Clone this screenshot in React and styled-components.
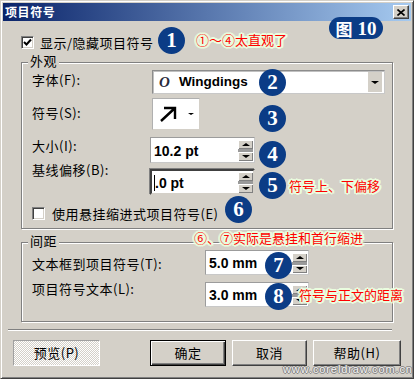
import React from 'react';
import styled, { createGlobalStyle, css } from 'styled-components';

const CJK = `"Noto Sans CJK SC", "Noto Sans", sans-serif`;
const SANS = `"Liberation Sans", Arial, sans-serif`;
const SERIF = `"Liberation Serif", "Times New Roman", serif`;

const Global = createGlobalStyle`
  html, body { margin: 0; padding: 0; background: #d4d0c8; }
  body { font-family: ${CJK}; color: #000; }
`;

const Stage = styled.div`
  position: relative;
  width: 414px;
  height: 379px;
  overflow: hidden;
`;

const Window = styled.div`
  box-sizing: border-box;
  width: 414px;
  height: 379px;
  background: #d4d0c8;
  border: 1px solid;
  border-color: #d4d0c8 #404040 #404040 #d4d0c8;
  box-shadow: inset 1px 1px 0 #fff, inset -1px -1px 0 #808080;
  padding: 2px;
  display: flex;
  flex-direction: column;
`;

const TitleBar = styled.div`
  flex: none;
  height: 18px;
  background: linear-gradient(to right, #0a246a, #a6caf0);
  display: flex;
  align-items: center;
  justify-content: space-between;
  padding: 0 2px;
`;

const TitleText = styled.span`
  color: #fff;
  font: bold 12px/18px ${CJK};
  letter-spacing: 0.6px;
`;

const CloseBtn = styled.div`
  box-sizing: border-box;
  width: 16px;
  height: 14px;
  background: #d4d0c8;
  border: 1px solid;
  border-color: #fff #404040 #404040 #fff;
  box-shadow: inset -1px -1px 0 #808080;
  display: flex;
  align-items: center;
  justify-content: center;
`;

const Body = styled.div`
  flex: 1;
  display: flex;
  flex-direction: column;
`;

const CheckRow = styled.div`
  display: flex;
  align-items: center;
  gap: ${p => p.$gap}px;
  height: 13px;
  margin: ${p => p.$mt}px 0 0 ${p => p.$ml}px;
  font: 13px/16px ${CJK};
  letter-spacing: 0.5px;
  white-space: nowrap;
`;

const CheckBox = styled.span`
  box-sizing: border-box;
  width: 13px;
  height: 13px;
  flex: none;
  background: #fff;
  border: 1px solid;
  border-color: #808080 #fff #fff #808080;
  box-shadow: inset 1px 1px 0 #404040, inset -1px -1px 0 #d4d0c8;
  display: flex;
  align-items: center;
  justify-content: center;
`;

const Group = styled.div`
  position: relative;
  box-sizing: border-box;
  margin: ${p => p.$mt}px 18px 0 18px;
  height: ${p => p.$h}px;
  border: 1px solid #808080;
  box-shadow: 1px 1px 0 #fff, inset 1px 1px 0 #fff;
  padding: 7px 0 0 10px;
  display: flex;
  flex-direction: column;
`;

const Legend = styled.span`
  position: absolute;
  left: 6px;
  top: -10px;
  padding: 0 2px;
  background: #d4d0c8;
  font: 13px/16px ${CJK};
  letter-spacing: 0.5px;
`;

const FormRow = styled.div`
  display: grid;
  grid-template-columns: ${p => p.$label}px auto;
  align-items: start;
  margin-top: ${p => p.$mt || 0}px;
  height: ${p => p.$h}px;
`;

const Label = styled.span`
  font: 13px/16px ${CJK};
  letter-spacing: 0.5px;
  margin-top: ${p => p.$dy}px;
  white-space: nowrap;
`;

const Combo = styled.div`
  box-sizing: border-box;
  margin-left: 2px;
  width: 233px;
  height: 24px;
  background: #fff;
  border: 1px solid;
  border-color: #8c8c8c #c8c8c8 #c8c8c8 #8c8c8c;
  box-shadow: inset 1px 1px 0 #c0c0c0;
  display: flex;
  align-items: center;
  padding: 0 2px 0 6px;
`;

const FontIcon = styled.span`
  font: italic bold 15px/16px ${SERIF};
  color: #2a2a3a;
  width: 20px;
`;

const ComboText = styled.span`
  flex: 1;
  font: bold 13.5px/16px ${SANS};
`;

const DropBtn = styled.span`
  width: 14px;
  height: 20px;
  background: #d4d0c8;
  display: flex;
  align-items: center;
  justify-content: center;
`;

const Tri = styled.span`
  width: 0;
  height: 0;
  border-left: ${p => p.$s}px solid transparent;
  border-right: ${p => p.$s}px solid transparent;
  ${p => (p.$up
    ? css`border-bottom: ${p.$s - 1}px solid #000;`
    : css`border-top: ${p.$s - 1}px solid #000;`)}
`;

const SymbolBox = styled.div`
  box-sizing: border-box;
  margin-left: 2px;
  width: 48px;
  height: 32px;
  background: #fff;
  border: 1px solid;
  border-color: #b0b0b0 #d4d0c8 #d4d0c8 #b0b0b0;
  display: flex;
  align-items: center;
  justify-content: space-between;
  padding: 0 5px 0 6px;
`;

const Spin = styled.div`
  box-sizing: border-box;
  width: ${p => p.$w}px;
  height: ${p => p.$h}px;
  background: #fff;
  border: 1px solid;
  border-color: #9c9c9c #c8c8c8 #c8c8c8 #9c9c9c;
  display: flex;
  align-items: stretch;
  padding: 2px 1px 1px 2px;
  ${p => p.$focused && css`
    border-width: 2px;
    border-color: #404040 #d4d0c8 #d4d0c8 #404040;
    box-shadow: -1px -1px 0 #808080;
    padding: 1px 0 0 1px;
  `}
`;

const SpinText = styled.span`
  flex: 1;
  display: flex;
  align-items: center;
  font: bold 14px/16px ${SANS};
  padding-left: 1px;
`;

const Caret = styled.span`
  display: inline-block;
  width: 1px;
  height: 16px;
  background: #000;
`;

const SpinCol = styled.div`
  width: 15px;
  display: flex;
  flex-direction: column;
  gap: 3px;
  background: #9a9a9a;
`;

const SpinBtn = styled.span`
  flex: 1;
  background: #d4d0c8;
  box-shadow: inset 1px 1px 0 #fff, inset -1px -1px 0 #808080;
  display: flex;
  align-items: center;
  justify-content: center;
`;

const Separator = styled.div`
  margin: 7px 0 0 5px;
  width: 384px;
  height: 0;
  border-top: 1px solid #808080;
  border-bottom: 1px solid #fff;
`;

const ButtonRow = styled.div`
  display: flex;
  margin-top: 9px;
  padding: 0 10px;
  gap: 6px;
`;

const Spacer = styled.span`
  flex: 1;
`;

const Btn = styled.div`
  box-sizing: border-box;
  width: ${p => p.$w}px;
  height: 26px;
  display: flex;
  align-items: center;
  justify-content: center;
  font: 13px/16px ${CJK};
  letter-spacing: 0.5px;
  background: #d4d0c8;
  border: 1px solid;
  border-color: #fff #404040 #404040 #fff;
  box-shadow: inset -1px -1px 0 #808080;
  ${p => p.$default && css`
    border: 1px solid #000;
    box-shadow: inset 1px 1px 0 #fff, inset -1px -1px 0 #404040, inset -2px -2px 0 #808080;
  `}
  ${p => p.$pressed && css`
    background: repeating-conic-gradient(#fff 0 25%, #d4d0c8 0 50%) 0 0 / 2px 2px;
    border-color: #a0a0a0 #fff #fff #a0a0a0;
    box-shadow: none;
  `}
`;

/* ---------- annotation overlays ---------- */

const Badge = styled.div`
  position: absolute;
  left: ${p => p.$x}px;
  top: ${p => p.$y}px;
  width: 27px;
  height: 27px;
  border-radius: 50%;
  background: #0b3c86;
  color: #fff;
  display: flex;
  align-items: center;
  justify-content: center;
  font: bold 21px/1 ${SERIF};
`;

const FigTag = styled.div`
  position: absolute;
  left: 329px;
  top: 17px;
  width: 54px;
  height: 22px;
  border-radius: 11px;
  background: #0b3c86;
  color: #fff;
  display: flex;
  align-items: center;
  justify-content: center;
  gap: 5px;
`;

const FigChar = styled.span`
  font: bold 17px/1 ${CJK};
`;

const FigNum = styled.span`
  font: bold 19px/1 ${SERIF};
`;

const halo = '#eafddf';
const Note = styled.div`
  position: absolute;
  left: ${p => p.$x}px;
  top: ${p => p.$y}px;
  color: #ff0000;
  font: 13px/16px ${CJK};
  white-space: nowrap;
  text-shadow:
    1px 0 ${halo}, -1px 0 ${halo}, 0 1px ${halo}, 0 -1px ${halo},
    2px 0 ${halo}, -2px 0 ${halo}, 0 2px ${halo}, 0 -2px ${halo},
    1px 1px ${halo}, -1px -1px ${halo}, 1px -1px ${halo}, -1px 1px ${halo},
    2px 1px ${halo}, -2px 1px ${halo}, 2px -1px ${halo}, -2px -1px ${halo};
`;

const Watermark = styled.div`
  position: absolute;
  left: 283px;
  top: 363px;
  font: 11px/12px ${SANS};
  letter-spacing: 0.9px;
  color: #f4f4f4;
  text-shadow: 1px 0 #808080, -1px 0 #808080, 0 1px #808080, 0 -1px #808080;
`;

const Check = () => (
  <svg width="9" height="9" viewBox="0 0 9 9">
    <path d="M1 4 L3.5 6.5 L8 1.5" stroke="#000" strokeWidth="2" fill="none" />
  </svg>
);

const CloseX = () => (
  <svg width="8" height="7" viewBox="0 0 8 7">
    <path d="M0.5 0.5 L7.5 6.5 M7.5 0.5 L0.5 6.5" stroke="#000" strokeWidth="1.6" />
  </svg>
);

const Arrow = () => (
  <svg width="20" height="18" viewBox="0 0 20 18">
    <path d="M2 16 L16 3 M5 3 H16 V14" stroke="#000" strokeWidth="2.4" fill="none" />
  </svg>
);

const SpinButtons = () => (
  <SpinCol>
    <SpinBtn><Tri $s={4} $up /></SpinBtn>
    <SpinBtn><Tri $s={4} /></SpinBtn>
  </SpinCol>
);

export default function App() {
  return (
    <Stage>
      <Global />
      <Window>
        <TitleBar>
          <TitleText>项目符号</TitleText>
          <CloseBtn><CloseX /></CloseBtn>
        </TitleBar>
        <Body>
          <CheckRow $mt={15} $ml={18} $gap={6}>
            <CheckBox><Check /></CheckBox>
            <span>显示/隐藏项目符号</span>
          </CheckRow>

          <Group $mt={13} $h={167}>
            <Legend>外观</Legend>
            <FormRow $label={118} $h={24}>
              <Label $dy={2}>字体(F):</Label>
              <Combo>
                <FontIcon>O</FontIcon>
                <ComboText>Wingdings</ComboText>
                <DropBtn><Tri $s={4} /></DropBtn>
              </Combo>
            </FormRow>
            <FormRow $label={118} $h={32} $mt={4}>
              <Label $dy={7}>符号(S):</Label>
              <SymbolBox>
                <Arrow />
                <Tri $s={3} />
              </SymbolBox>
            </FormRow>
            <FormRow $label={118} $h={26} $mt={7}>
              <Label $dy={1}>大小(I):</Label>
              <Spin $w={105} $h={26}>
                <SpinText>10.2 pt</SpinText>
                <SpinButtons />
              </Spin>
            </FormRow>
            <FormRow $label={118} $h={26} $mt={6}>
              <Label $dy={-7}>基线偏移(B):</Label>
              <Spin $w={105} $h={26} $focused>
                <SpinText><Caret />.0 pt</SpinText>
                <SpinButtons />
              </Spin>
            </FormRow>
            <CheckRow $mt={12} $ml={0} $gap={7}>
              <CheckBox />
              <span>使用悬挂缩进式项目符号(E)</span>
            </CheckRow>
          </Group>

          <Group $mt={13} $h={80}>
            <Legend>间距</Legend>
            <FormRow $label={173} $h={25}>
              <Label $dy={6}>文本框到项目符号(T):</Label>
              <Spin $w={104} $h={25}>
                <SpinText>5.0 mm</SpinText>
                <SpinButtons />
              </Spin>
            </FormRow>
            <FormRow $label={173} $h={25} $mt={7}>
              <Label $dy={-1}>项目符号文本(L):</Label>
              <Spin $w={104} $h={25}>
                <SpinText>3.0 mm</SpinText>
                <SpinButtons />
              </Spin>
            </FormRow>
          </Group>

          <Separator />

          <ButtonRow>
            <Btn $w={87} $pressed>预览(P)</Btn>
            <Spacer />
            <Btn $w={76} $default>确定</Btn>
            <Btn $w={75}>取消</Btn>
            <Btn $w={88}>帮助(H)</Btn>
          </ButtonRow>
        </Body>
      </Window>

      <FigTag><FigChar>图</FigChar><FigNum>10</FigNum></FigTag>

      <Note $x={196} $y={32}>①～④太直观了</Note>
      <Note $x={289} $y={178}>符号上、下偏移</Note>
      <Note $x={194} $y={230}>⑥、⑦实际是悬挂和首行缩进</Note>
      <Note $x={299} $y={287}>符号与正文的距离</Note>

      <Badge $x={158} $y={27}>1</Badge>
      <Badge $x={259} $y={69}>2</Badge>
      <Badge $x={259} $y={105}>3</Badge>
      <Badge $x={259} $y={141}>4</Badge>
      <Badge $x={259} $y={172}>5</Badge>
      <Badge $x={225} $y={196}>6</Badge>
      <Badge $x={265} $y={252}>7</Badge>
      <Badge $x={265} $y={283}>8</Badge>

      <Watermark>www.coreldraw.com.cn</Watermark>
    </Stage>
  );
}
